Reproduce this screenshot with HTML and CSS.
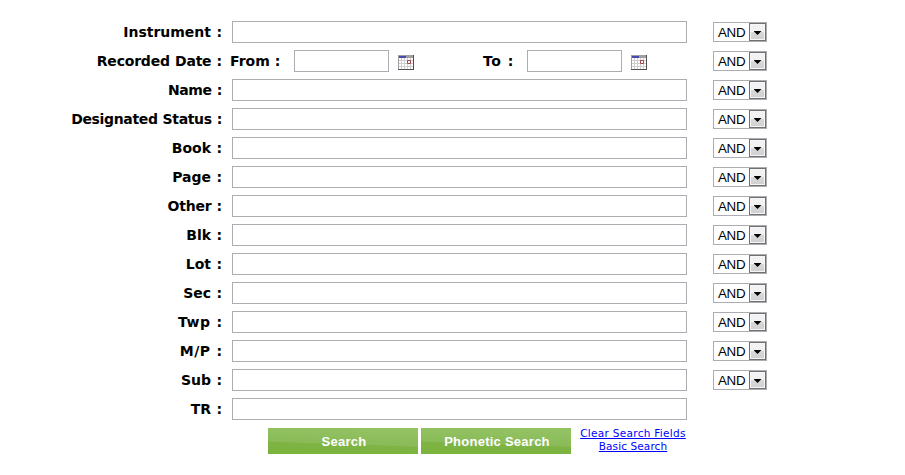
FILE: index.html
```html
<!DOCTYPE html>
<html lang="en">
<head>
<meta charset="utf-8">
<title>Document Search</title>
<link rel="stylesheet" href="styles.css">
</head>
<body>
<svg class="defs" aria-hidden="true">
  <symbol id="calendar" viewBox="0 0 16 15">
    <path fill="#d0ccd0" d="M0 0h16v15H0z"/>
    <path fill="#fff" d="M1 3h2v2H1zM4 3h2v2H4zM7 3h2v2H7zM10 3h2v2h-2zM13 3h2v2h-2zM1 6h2v2H1zM4 6h2v2H4zM7 6h2v2H7zM10 6h2v2h-2zM13 6h2v2h-2zM1 9h2v2H1zM4 9h2v2H4zM7 9h2v2H7zM10 9h2v2h-2zM13 9h2v2h-2zM1 12h2v2H1zM4 12h2v2H4zM7 12h2v2H7zM10 12h2v2h-2zM13 12h2v2h-2z"/>
    <path fill="#a0a0a0" d="M0 0h16v3H0zM0 3h1v12H0z"/>
    <path fill="#4a4aae" d="M1 1h7v2H1z"/>
    <path fill="#505054" d="M15 0h1v15H0v-1h15z"/>
    <path fill="none" stroke="#a04848" d="M9.500 5.500h3v3h-3z"/>
  </symbol>
</svg>
<form class="search">
  <div class="row"><label>Instrument :</label><input class="field"><span class="op">AND<i></i></span></div>
  <div class="row"><label class="snug">Recorded Date :</label>
    <div class="dates">
      <span class="from">From :</span><input class="date"><svg class="cal"><use href="#calendar"/></svg>
      <span class="to wide">To :</span><input class="date"><svg class="cal"><use href="#calendar"/></svg>
    </div><span class="op">AND<i></i></span></div>
  <div class="row"><label class="tight">Name :</label><input class="field"><span class="op">AND<i></i></span></div>
  <div class="row"><label class="tight">Designated Status :</label><input class="field"><span class="op">AND<i></i></span></div>
  <div class="row"><label>Book :</label><input class="field"><span class="op">AND<i></i></span></div>
  <div class="row"><label>Page :</label><input class="field"><span class="op">AND<i></i></span></div>
  <div class="row"><label class="snug">Other :</label><input class="field"><span class="op">AND<i></i></span></div>
  <div class="row"><label>Blk :</label><input class="field"><span class="op">AND<i></i></span></div>
  <div class="row"><label>Lot :</label><input class="field"><span class="op">AND<i></i></span></div>
  <div class="row"><label>Sec :</label><input class="field"><span class="op">AND<i></i></span></div>
  <div class="row"><label class="wide">Twp :</label><input class="field"><span class="op">AND<i></i></span></div>
  <div class="row"><label class="wide">M/P :</label><input class="field"><span class="op">AND<i></i></span></div>
  <div class="row"><label>Sub :</label><input class="field"><span class="op">AND<i></i></span></div>
  <div class="row"><label>TR :</label><input class="field"></div>
  <div class="actions">
    <button type="button">Search</button>
    <button type="button">Phonetic Search</button>
    <div class="links"><a href="#">Clear Search Fields</a><a href="#">Basic Search</a></div>
  </div>
</form>
</body>
</html>
```
FILE: styles.css
```css
* { box-sizing: border-box; }
body {
  margin: 0;
  background: #fff;
  color: #000;
  font: bold 14px/22px Verdana, "DejaVu Sans", sans-serif;
}
.defs { display: none; }
.search { padding-top: 21px; }
.row {
  display: grid;
  grid-template-columns: 222px 455px 54px;
  column-gap: 10px;
  align-items: center;
  height: 22px;
  margin-bottom: 7px;
}
.row label { text-align: right; white-space: nowrap; word-spacing: 0.5px; }
.row .tight { letter-spacing: -0.35px; }
.row .snug { letter-spacing: -0.2px; }
.row .wide { letter-spacing: 0.5px; }
.row label.wide { margin-right: -0.5px; }
.row .op { margin-left: 16px; }
input {
  height: 22px;
  margin: 0;
  padding: 2px;
  border: 1px solid #abadb3;
  border-radius: 0;
  background: #fff;
  outline: none;
}
.field { width: 455px; }
.date { width: 95px; }
.dates { display: flex; align-items: center; margin-left: -2px; white-space: nowrap; }
.from { width: 64px; }
.to { width: 44px; margin-left: 69px; word-spacing: 1px; }
.cal { width: 16px; height: 15px; margin: 3px 0 0 9px; flex: none; }
.op {
  display: flex;
  justify-content: space-between;
  width: 54px;
  height: 20px;
  padding-left: 4px;
  border: 1px solid #abadb3;
  font: 13.333px/19px "Liberation Sans", Arial, sans-serif;
  letter-spacing: -0.3px;
}
.op i {
  display: flex;
  justify-content: center;
  align-items: center;
  width: 17px;
  height: 18px;
  border: 1px solid #707070;
  box-shadow: inset 0 0 0 1px #f6f6f6;
  background: linear-gradient(#f2f2f2 50%, #dadada 50%, #cfcfcf);
}
.op i::before {
  content: "";
  width: 8px;
  height: 4px;
  margin-top: 2px;
  background: #000;
  clip-path: polygon(0 0, 100% 0, 50% 100%);
}
.actions { display: flex; gap: 3px; margin: 8px 0 0 268px; }
.row:nth-last-child(2) { margin-bottom: 0; }
button {
  width: 150px;
  height: 26px;
  padding: 1px 0 0 2px;
  border: 0;
  color: #fff;
  font: bold 13px/25px "Liberation Sans", Arial, sans-serif;
  letter-spacing: 0.25px;
  background: linear-gradient(182deg, #94c364, #8abb58 59%, #7fb445 61%, #7ab33c);
}
.links {
  width: 110px;
  margin: -1px 0 0 4px;
  text-align: center;
  font: 10.500px/13px Verdana, "DejaVu Sans", sans-serif;
  letter-spacing: 0.3px;
  white-space: nowrap;
}
.links a { display: block; color: #00f; text-decoration: underline; }
.links a + a { letter-spacing: 0.1px; }
```
